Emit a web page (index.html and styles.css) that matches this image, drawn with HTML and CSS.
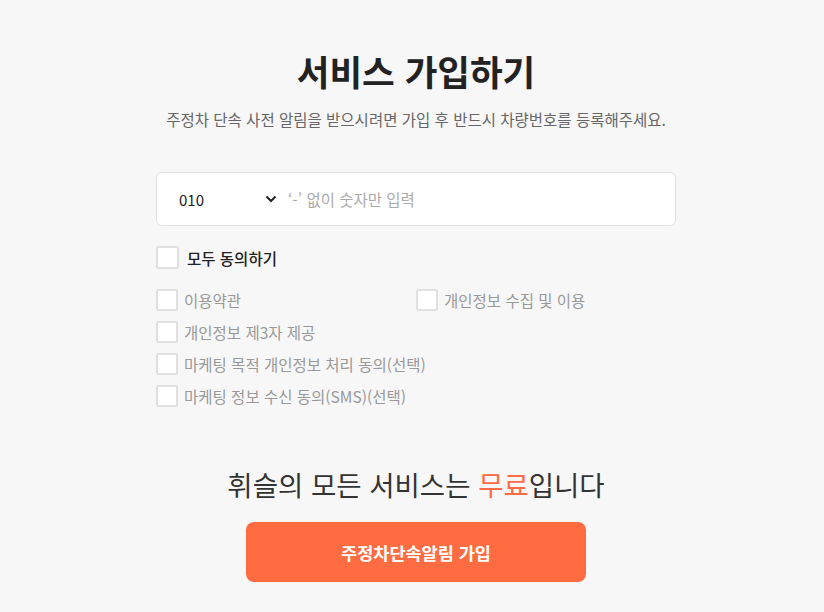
FILE: index.html
```html
<!DOCTYPE html>
<html lang="ko">
<head>
<meta charset="utf-8">
<link rel="stylesheet" href="styles.css">
</head>
<body>
<main class="wrap">
  <h1 class="title">서비스 가입하기</h1>
  <p class="sub">주정차 단속 사전 알림을 받으시려면 가입 후 반드시 차량번호를 등록해주세요.</p>
  <div class="phone">
    <div class="prefix">
      <span>010</span>
      <svg class="chev" width="12" height="8" viewBox="0 0 12 8"><path d="M1.5 1.5 6 6l4.5-4.5" fill="none" stroke="#222" stroke-width="2"/></svg>
    </div>
    <span class="placeholder">‘-’ 없이 숫자만 입력</span>
  </div>
  <label class="all"><span class="box big"></span>모두 동의하기</label>
  <div class="terms">
    <label class="item"><span class="box"></span>이용약관</label>
    <label class="item"><span class="box"></span>개인정보 수집 및 이용</label>
    <label class="item full"><span class="box"></span>개인정보 제3자 제공</label>
    <label class="item full"><span class="box"></span>마케팅 목적 개인정보 처리 동의(선택)</label>
    <label class="item full"><span class="box"></span>마케팅 정보 수신 동의(SMS)(선택)</label>
  </div>
  <p class="free">휘슬의 모든 서비스는 <em>무료</em>입니다</p>
  <button class="join">주정차단속알림 가입</button>
</main>
</body>
</html>
```
FILE: styles.css
```css
html, body { margin: 0; padding: 0; }
body {
  background: #f7f7f7;
  padding-left: 8px;
  font-family: "Noto Sans CJK KR", "Noto Sans", sans-serif;
  color: #222;
}
.wrap {
  width: 520px;
  margin: 0 auto;
  display: flex;
  flex-direction: column;
  padding-top: 46px;
}
.title {
  margin: 0;
  text-align: center;
  font-size: 35.5px;
  font-weight: 700;
  line-height: 50px;
  color: #222;
}
.sub {
  margin: 12px 0 0;
  text-align: center;
  font-size: 15.5px;
  line-height: 22px;
  color: #666;
}
.phone {
  margin-top: 42px;
  height: 52px;
  background: #fff;
  border: 1px solid #e2e2e2;
  border-radius: 6px;
  display: flex;
  align-items: center;
  font-size: 15px;
}
.prefix {
  width: 98px;
  padding-left: 22px;
  display: flex;
  align-items: center;
  justify-content: space-between;
  color: #222;
}
.chev { display: block; }
.placeholder {
  margin-left: 11px;
  color: #aaa;
  font-size: 15.5px;
}
.all {
  margin-top: 20px;
  display: flex;
  align-items: center;
  font-size: 15.5px;
  font-weight: 500;
  color: #222;
  line-height: 22px;
}
.box {
  width: 18px;
  height: 18px;
  border: 2px solid #e0e0e0;
  border-radius: 2px;
  background: #fff;
  flex: none;
  margin-right: 6px;
}
.box.big { width: 19px; height: 19px; margin-right: 8px; }
.terms {
  margin-top: 20px;
  display: grid;
  grid-template-columns: 260px 260px;
  row-gap: 10px;
}
.item {
  display: flex;
  align-items: center;
  font-size: 15.5px;
  line-height: 22px;
  color: #999;
}
.item.full { grid-column: 1 / 3; }
.free {
  margin: 57px 0 0;
  text-align: center;
  font-size: 27.5px;
  line-height: 40px;
  color: #333;
}
.free em { font-style: normal; color: #ff6b45; }
.join {
  align-self: center;
  margin-top: 18px;
  width: 340px;
  height: 60px;
  border: none;
  border-radius: 8px;
  background: #ff6c42;
  color: #fff;
  font-family: inherit;
  font-size: 17.5px;
  font-weight: 700;
}
```
